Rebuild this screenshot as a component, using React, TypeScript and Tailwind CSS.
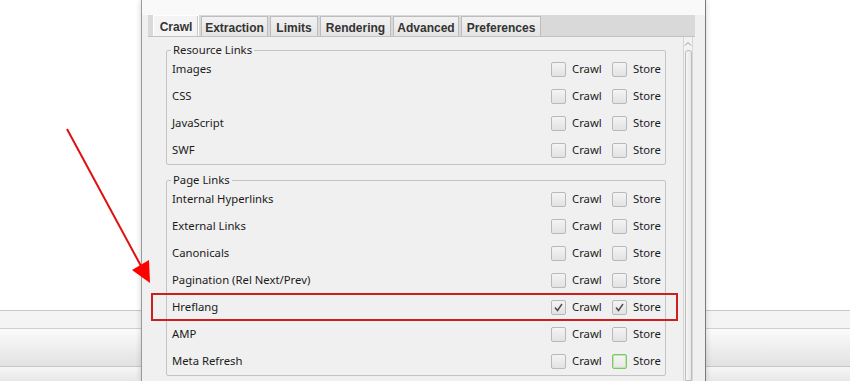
import React from "react";

const tabs = [
  { name: "Crawl", w: "w-[46px]", active: true },
  { name: "Extraction", w: "w-[67px]" },
  { name: "Limits", w: "w-[48px]" },
  { name: "Rendering", w: "w-[71px]" },
  { name: "Advanced", w: "w-[66px]" },
  { name: "Preferences", w: "w-[80px]" },
];

type Row = { label: string; crawl?: boolean; store?: boolean; focus?: boolean };

const resourceRows: Row[] = [
  { label: "Images" },
  { label: "CSS" },
  { label: "JavaScript" },
  { label: "SWF" },
];

const pageRows: Row[] = [
  { label: "Internal Hyperlinks" },
  { label: "External Links" },
  { label: "Canonicals" },
  { label: "Pagination (Rel Next/Prev)" },
  { label: "Hreflang", crawl: true, store: true },
  { label: "AMP" },
  { label: "Meta Refresh", focus: true },
];

const Checkbox = ({ checked, focus }: { checked?: boolean; focus?: boolean }) => (
  <div
    className={
      focus
        ? "w-[15px] h-[15px] rounded-[2px] border border-[#7cc862] shadow-[inset_0_0_0_1px_#bfe6b0] bg-gradient-to-b from-[#f6f6f6] to-[#e6e6e6] flex items-center justify-center"
        : "w-[15px] h-[15px] rounded-[2px] border border-[#b9b9b9] bg-gradient-to-b from-[#f4f4f4] to-[#e2e2e2] flex items-center justify-center"
    }
  >
    {checked && (
      <svg width="11" height="11" viewBox="0 0 11 11">
        <path d="M2 5.5 L4.5 8.5 L9 2" fill="none" stroke="#4a4a4a" strokeWidth="1.4" />
      </svg>
    )}
  </div>
);

const OptionRow = ({ row }: { row: Row }) => (
  <div className="flex items-center h-[27px]">
    <div className="flex-1 pl-[5px]">{row.label}</div>
    <div className="w-[114px] flex items-center">
      <div className="w-[61px] flex items-center gap-[6px]">
        <Checkbox checked={row.crawl} />
        <span>Crawl</span>
      </div>
      <div className="flex items-center gap-[6px]">
        <Checkbox checked={row.store} focus={row.focus} />
        <span>Store</span>
      </div>
    </div>
  </div>
);

const Group = ({ title, rows, className }: { title: string; rows: Row[]; className?: string }) => (
  <fieldset className={"w-[500px] border border-[#c4c4c4] rounded-[2px] " + (className ?? "")}>
    <legend className="ml-[4px] px-[2px] leading-[12px]">{title}</legend>
    {rows.map((r) => (
      <OptionRow key={r.label} row={r} />
    ))}
  </fieldset>
);

const BottomBars = () => (
  <div className="flex flex-col">
    <div className="h-[1px] bg-[#c8c8c8]" />
    <div className="h-[17px] bg-[#f4f4f4]" />
    <div className="h-[1px] bg-[#cfcfcf]" />
    <div className="h-[37px] bg-gradient-to-b from-[#fbfbfb] to-[#e2e2e2]" />
    <div className="h-[1px] bg-[#c6c6c6]" />
    <div className="h-[14px] bg-gradient-to-b from-[#f6f6f6] to-[#e8e8e8]" />
  </div>
);

export default function App() {
  return (
    <div className="relative w-[850px] h-[381px] overflow-hidden bg-white font-['Noto_Sans',sans-serif] text-[11.3px] text-[#1b1b1b]">
      {/* app behind the dialog */}
      <div className="flex flex-col h-full">
        <div className="flex-1" />
        <BottomBars />
      </div>

      {/* options dialog */}
      <div className="absolute left-[141px] top-0 w-[565px] h-[381px] bg-[#f0f0f0] border-l border-l-[#9a9a9a] border-r border-r-[#7a7a7a] shadow-[0_0_6px_rgba(0,0,0,0.18)] flex flex-col">
        <div className="h-[15px] bg-[#f9f9f9]" />
        <div className="ml-[6px] w-[547px] flex-1 flex flex-col">
          <div className="h-[22px] bg-[#d9d9d9] flex items-end pl-[5px] gap-[2px] border-b border-[#c2c2c2]">
            {tabs.map((t) => (
              <div
                key={t.name}
                className={
                  "flex items-center justify-center pt-[2px] font-['Liberation_Sans',Arial,sans-serif] font-bold text-[12px] text-[#333] border border-b-0 " +
                  t.w +
                  (t.active
                    ? " h-[21px] bg-[#f4f4f4] border-[#ffffff] shadow-[inset_-1px_0_0_#c9c9c9]"
                    : " h-[20px] bg-gradient-to-b from-[#f2f2f2] to-[#e4e4e4] border-[#bdbdbd]")
                }
              >
                {t.name}
              </div>
            ))}
          </div>
          <div className="flex-1 flex">
            <div className="w-[535px] pl-[18px] pt-[7px]">
              <Group title="Resource Links" rows={resourceRows} />
              <Group title="Page Links" rows={pageRows} className="mt-[9px]" />
            </div>
            <div className="w-[10px] border-l border-r border-[#d6d6d6] bg-[#f2f2f2] flex flex-col items-center">
              <svg width="8" height="6" viewBox="0 0 8 6" className="mt-[4px]">
                <path d="M1 4.5 L4 1.5 L7 4.5" fill="none" stroke="#9a9a9a" strokeWidth="1" />
              </svg>
              <div className="mt-[3px] w-[7px] flex-1 rounded-t-[3px] border border-[#bdbdbd] bg-gradient-to-r from-[#f7f7f7] to-[#e6e6e6]" />
            </div>
          </div>
        </div>
      </div>

      {/* annotation: highlight and arrow */}
      <div className="absolute left-[151px] top-[293px] w-[527px] h-[28px] border-2 border-[#cc1f1f]" />
      <svg className="absolute left-0 top-0" width="850" height="381">
        <line x1="67" y1="129" x2="141" y2="266" stroke="#e01010" strokeWidth="2" />
        <polygon points="150,283 132,270 149,260" fill="#ff0000" />
      </svg>
    </div>
  );
}
